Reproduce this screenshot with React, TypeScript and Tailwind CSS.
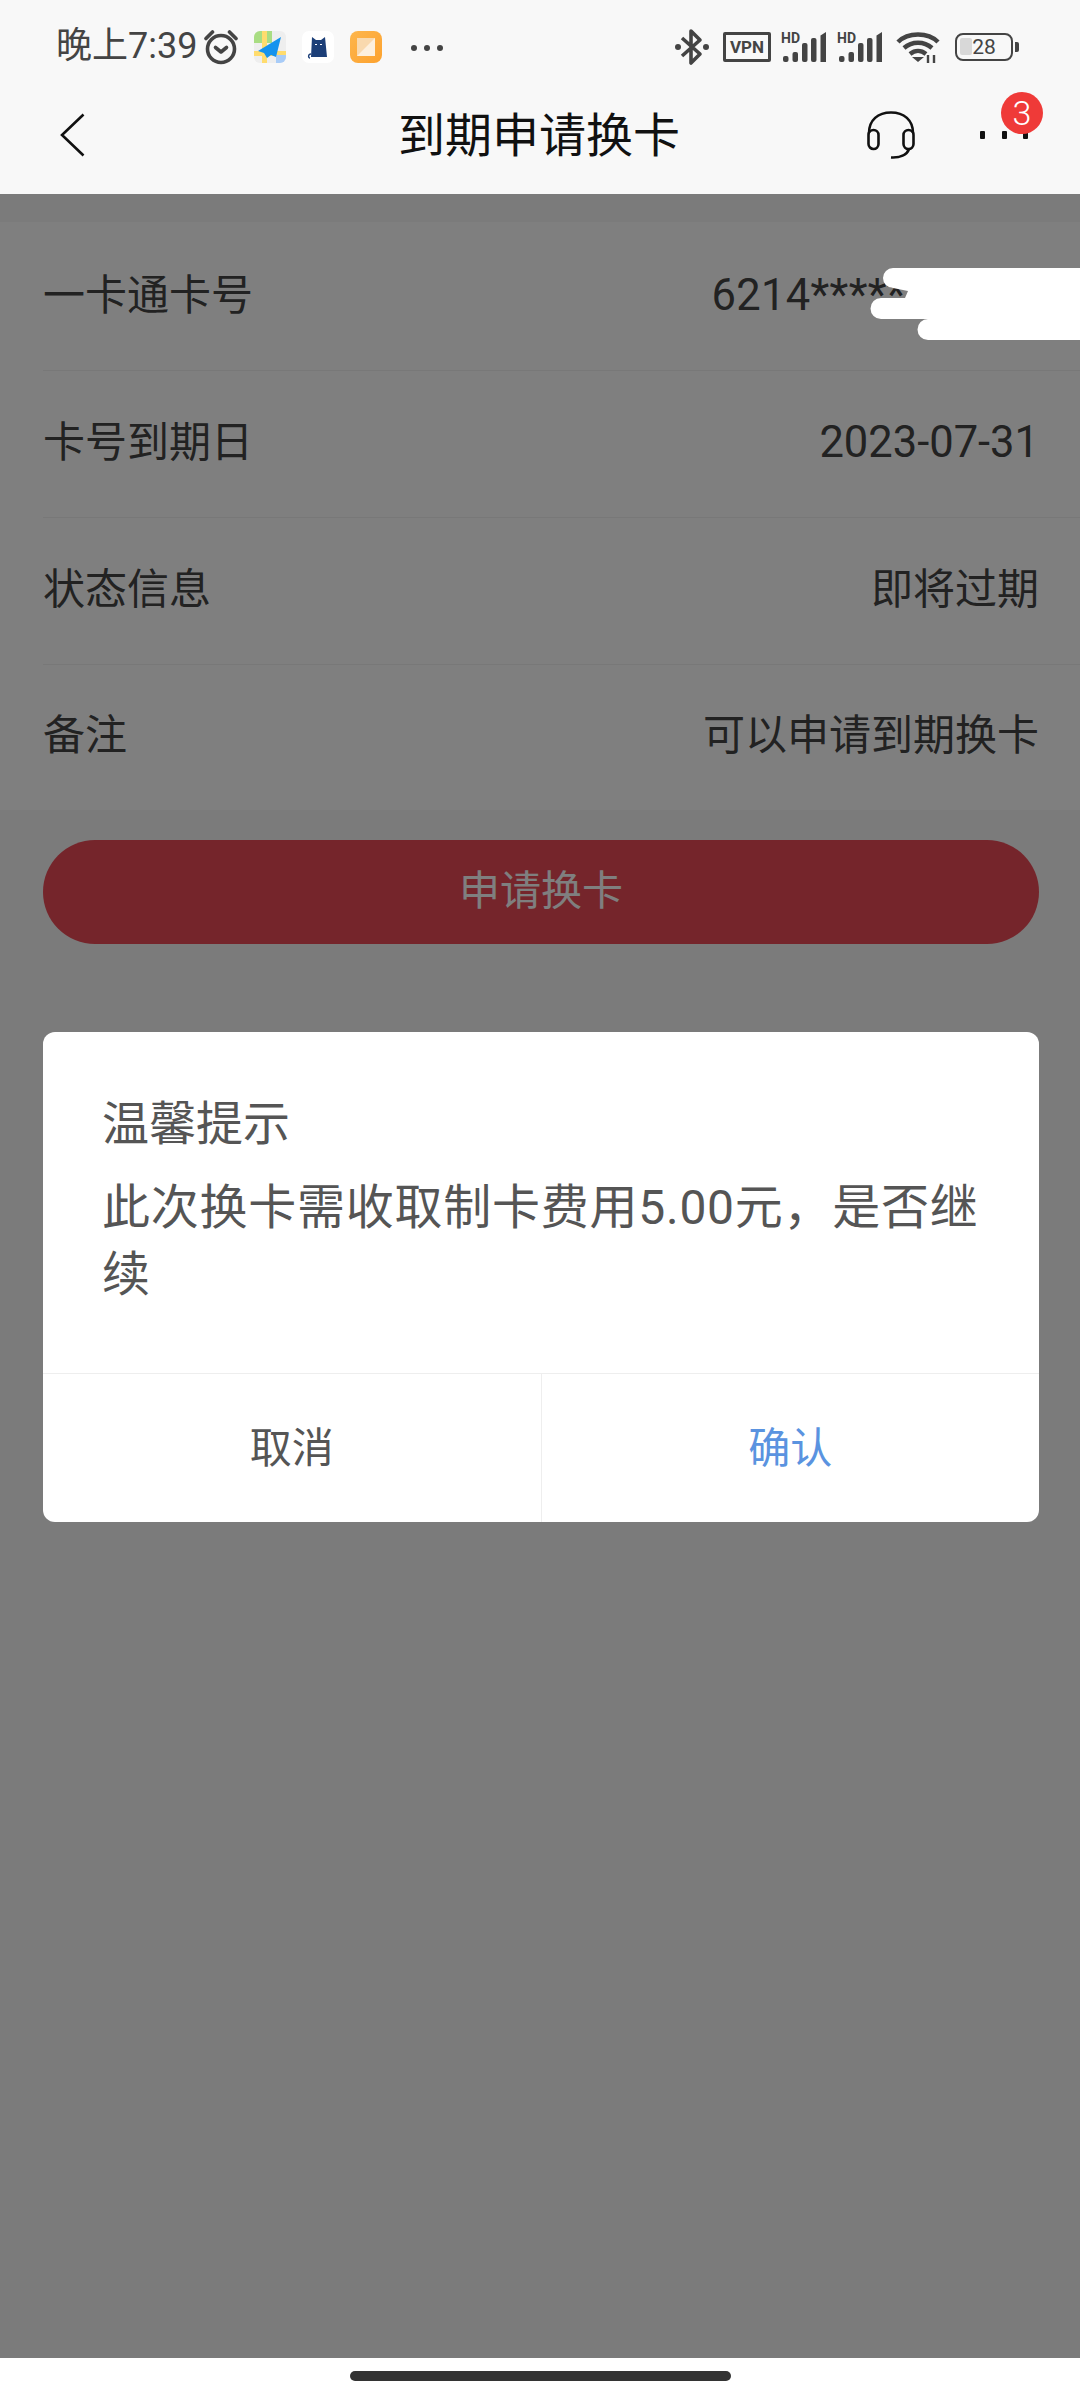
const fontStack = "font-['Roboto','Noto_Sans_CJK_SC',sans-serif]";

const rows = [
  { label: "一卡通卡号", value: "6214************", valueClass: "text-[43.500px] tracking-[0.300px]" },
  { label: "卡号到期日", value: "2023-07-31", valueClass: "text-[43.500px]" },
  { label: "状态信息", value: "即将过期", valueClass: "text-[42px]" },
  { label: "备注", value: "可以申请到期换卡", valueClass: "text-[42px]" },
];

function Signal() {
  return (
    <svg className="-mt-[2px]" width="46" height="32" viewBox="0 0 46 32" fill="#444">
      <text x="0" y="13" fontSize="14" fontWeight="700" fontFamily="Roboto, sans-serif">HD</text>
      <rect x="2" y="26" width="5.500" height="6" rx="2" />
      <rect x="11.500" y="22" width="5.500" height="10" rx="2" />
      <rect x="21" y="13" width="5.500" height="19" rx="2" />
      <rect x="30" y="8" width="5.500" height="24" rx="2" />
      <path d="M39.500 5.500 45 2v30h-5.500z" />
    </svg>
  );
}

function StatusBar() {
  return (
    <div className="flex h-[70px] items-end pl-[56px] pr-[61px] pb-[1px]">
      <span className="text-[36px] leading-[46px] text-[#444]">晚上7:39</span>
      <svg className="ml-[7px] mb-[4px]" width="34" height="36" viewBox="0 0 34 36" fill="none" stroke="#444" strokeWidth="3.600">
        <circle cx="17" cy="20" r="13.500" />
        <path d="M11.500 18.500 17 23l5.500-4.500" strokeLinecap="round" strokeLinejoin="round" />
        <path d="M2 9.500 8.500 3M32 9.500 25.500 3" strokeLinecap="round" />
      </svg>
      <svg className="ml-[16px] mb-[6px]" width="32" height="32" viewBox="0 0 32 32">
        <rect width="32" height="32" rx="6" fill="#eeeeee" />
        <path d="M0 6a6 6 0 0 1 6-6h12v12H0z" fill="#a9dd83" />
        <rect x="8" y="0" width="5" height="32" fill="#ffdc6e" />
        <rect x="0" y="20" width="32" height="5" fill="#ffdc6e" />
        <path d="M22 32v-8h10v2a6 6 0 0 1-6 6z" fill="#a8ccf8" />
        <path d="M27 6 4 20l6 2 3 5 4-3 5 2z" fill="#1493ee" />
      </svg>
      <div className="ml-[16px] mb-[6px] flex h-[32px] w-[32px] items-center justify-center rounded-[7px] bg-white">
        <svg width="24" height="26" viewBox="0 0 24 26" fill="#1c3f78">
          <path d="M6 3l4 3h5l4-3 2 20H5z" />
          <path d="M5 20c-3 0-3 4-1 4" fill="none" stroke="#1c3f78" strokeWidth="1.400" />
          <rect x="9" y="10" width="2" height="1" fill="#fff" />
          <rect x="14" y="10" width="2" height="1" fill="#fff" />
        </svg>
      </div>
      <div className="ml-[16px] mb-[6px] flex h-[32px] w-[32px] items-center justify-center rounded-[8px] bg-gradient-to-br from-[#fdb64c] to-[#fda22d]">
        <svg width="20" height="20" viewBox="0 0 20 20">
          <path d="M1 1h18v18H1z" fill="#f9d9ae" />
          <path d="M1 19 19 1v18z" fill="#fdf0de" />
        </svg>
      </div>
      <div className="ml-[29px] mb-[18px] flex gap-[7px]">
        <span className="h-[6px] w-[6px] rounded-full bg-[#444]" />
        <span className="h-[6px] w-[6px] rounded-full bg-[#444]" />
        <span className="h-[6px] w-[6px] rounded-full bg-[#444]" />
      </div>
      <div className="ml-auto mb-[2px] flex h-[40px] items-center">
        <svg width="34" height="38" viewBox="0 0 34 38" fill="none" stroke="#444" strokeWidth="3.600">
          <path d="M7 10 25 26 16 35V3l9 9L7 28" strokeLinejoin="round" />
          <circle cx="3" cy="19" r="3" fill="#444" stroke="none" />
          <circle cx="31" cy="19" r="3" fill="#444" stroke="none" />
        </svg>
        <div className="ml-[14px] flex h-[30px] w-[48px] items-center justify-center rounded-[2px] border-[3px] border-[#444] font-['Roboto',sans-serif] text-[17px] font-bold leading-none text-[#444]">VPN</div>
        <div className="ml-[10px] flex gap-[10px]">
          <Signal />
          <Signal />
        </div>
        <svg className="ml-[13px]" width="44" height="32" viewBox="0 0 44 32" fill="none" stroke="#444" strokeWidth="4.500">
          <path d="M2 11C12 1 32 1 42 11" />
          <path d="M8 17c8-7 20-7 28 0" />
          <path d="M14 23c5-4 11-4 16 0" />
          <path d="M16 26h12l-6 5z" fill="#444" stroke="none" />
          <path d="M32 24v8M38 24v8" strokeWidth="2.400" />
        </svg>
        <div className="ml-[15px] flex items-center gap-[2px]">
          <div className="relative flex h-[28px] w-[58px] items-center justify-center overflow-hidden rounded-[8px] border-[2.500px] border-[#444]">
            <span className="absolute left-[3px] top-[3px] h-[17px] w-[12px] rounded-[2px] bg-[#d8d8d8]" />
            <span className="relative font-['Roboto',sans-serif] text-[21px] leading-none text-[#444]">28</span>
          </div>
          <span className="h-[10px] w-[4px] rounded-r-[2px] bg-[#444]" />
        </div>
      </div>
    </div>
  );
}

function NavBar() {
  return (
    <div className="grid h-[124px] grid-cols-[1fr_auto_1fr] items-center pl-[60px] pr-[52px] pt-[6px]">
      <svg width="26" height="44" viewBox="0 0 26 44" fill="none" stroke="#111" strokeWidth="2.600">
        <path d="M23.500 1.500 2 22l21.500 20.500" />
      </svg>
      <span className="-ml-[10px] text-[47px] leading-none text-[#111]">到期申请换卡</span>
      <div className="flex items-center justify-end gap-[65px]">
        <svg width="48" height="48" viewBox="0 0 48 48" fill="none" stroke="#111" strokeWidth="2.600">
          <path d="M2 22C2 9 11 1.500 24 1.500S46 9 46 22" />
          <rect x="1.500" y="19" width="10" height="19" rx="5" />
          <rect x="36.500" y="19" width="10" height="19" rx="5" />
          <path d="M42 38c-2 6-9 9-18 8.500" />
        </svg>
        <div className="relative flex h-[48px] w-[48px] items-center justify-between">
          <span className="h-[8px] w-[5px] rounded-[1px] bg-[#111]" />
          <span className="h-[8px] w-[5px] rounded-[1px] bg-[#111]" />
          <span className="h-[8px] w-[5px] rounded-[1px] bg-[#111]" />
          <span className="absolute -right-[15px] -top-[19px] flex h-[42px] w-[42px] items-center justify-center rounded-full bg-[#ef3a38] font-['Roboto',sans-serif] text-[34px] font-light leading-none text-white">3</span>
        </div>
      </div>
    </div>
  );
}

// white marker strokes painted on top of the card number, above the dim layer
function ScribbleOut() {
  return (
    <svg className="absolute right-0 top-[74px]" width="210" height="74" viewBox="870 268 210 74" fill="#fff">
      <path d="M893 268H1080V340H928a10.500 10.500 0 0 1 0-21H881a10 10 0 0 1 0-21H905l3-7-15-3a10 10 0 0 1 0-20z" />
    </svg>
  );
}

export default function App() {
  return (
    <div className={`flex h-[2400px] w-[1080px] flex-col overflow-hidden bg-white ${fontStack}`}>
      <div className="bg-[#f8f8f8]">
        <StatusBar />
        <NavBar />
      </div>

      <main className="relative h-[2164px] bg-[#f6f6f6] pt-[28px]">
        <div className="bg-white pt-[2px]">
          {rows.map((row, i) => (
            <div key={row.label} className={`pl-[43px] ${i < 3 ? "h-[147px]" : "h-[145px]"}`}>
              <div className={`flex h-full items-center justify-between pr-[41px] pb-[3px] ${i < 3 ? "border-b border-[#f0f0f0]" : ""}`}>
                <span className="text-[42px] leading-none text-[#444]">{row.label}</span>
                <span className={`${row.valueClass} leading-none text-[#444]`}>{row.value}</span>
              </div>
            </div>
          ))}
        </div>
        <div className="ml-[43px] mt-[30px] flex h-[104px] w-[996px] items-center justify-center rounded-full bg-[#ea4a56] text-[41px] text-white">申请换卡</div>

        <div className="absolute inset-0 bg-black/50 pt-[838px]">
          <ScribbleOut />
          <div className="ml-[43px] w-[996px] overflow-hidden rounded-[12px] bg-white">
            <div className="h-[341px] pl-[59px] pr-[50px] pt-[62px] text-[#555]">
              <div className="text-[47px] leading-[60px]">温馨提示</div>
              <div className="mt-[20px] text-[48px] leading-[67px] tracking-[0.750px]">此次换卡需收取制卡费用5.00元，是否继续</div>
            </div>
            <div className="flex h-[149px] border-t border-[#eeeeee] text-[42px]">
              <div className="flex flex-1 items-center justify-center border-r border-[#eeeeee] text-[#555]">取消</div>
              <div className="flex flex-1 items-center justify-center text-[#5a93e0]">确认</div>
            </div>
          </div>
        </div>
      </main>

      <div className="flex flex-1 justify-center bg-white pt-[13px]">
        <div className="h-[10px] w-[381px] rounded-full bg-[#333]" />
      </div>
    </div>
  );
}
